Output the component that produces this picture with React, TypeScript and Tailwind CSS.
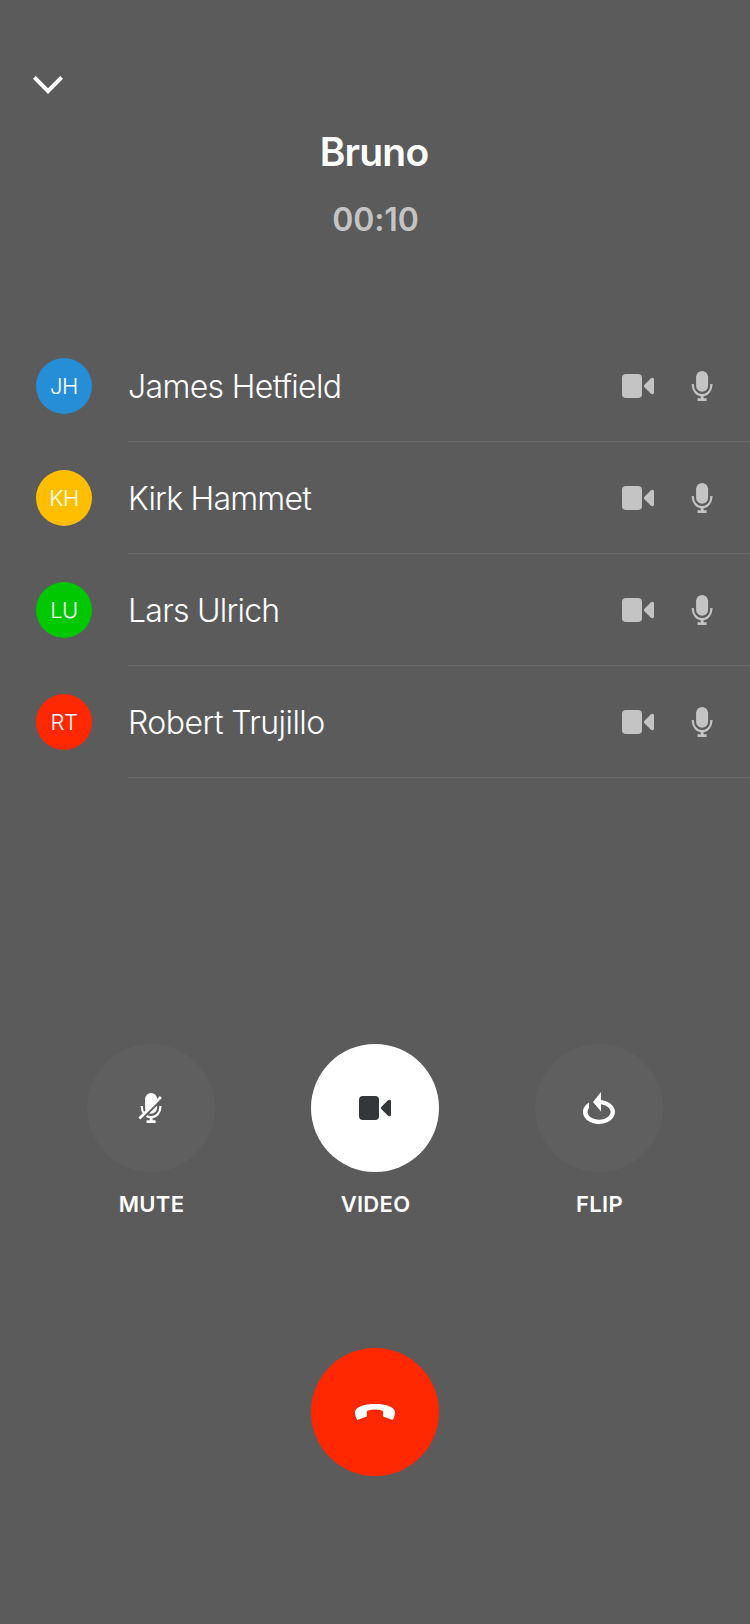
import React, { useId } from "react";

type Participant = { initials: string; name: string; color: string; tracking: string };

const participants: Participant[] = [
  { initials: "JH", name: "James Hetfield", color: "bg-[#258ed7]", tracking: "tracking-[-0.65px]" },
  { initials: "KH", name: "Kirk Hammet", color: "bg-[#ffbf00]", tracking: "tracking-[-0.78px]" },
  { initials: "LU", name: "Lars Ulrich", color: "bg-[#00c800]", tracking: "tracking-[-0.75px]" },
  { initials: "RT", name: "Robert Trujillo", color: "bg-[#ff2800]", tracking: "tracking-[-0.55px]" },
];

function VideoIcon() {
  return (
    <svg width="32" height="24" viewBox="0 0 32 24" fill="currentColor">
      <rect width="20" height="24" rx="4" />
      <path d="M22.2 11.1 28.7 4.6Q30 3.4 31.2 4.1Q32 4.5 32 5.6V18.4Q32 19.5 31.2 19.9Q30 20.6 28.7 19.4L22.2 12.9Q21.4 12 22.2 11.1Z" />
    </svg>
  );
}

function MicShape() {
  return (
    <>
      <rect x="5.1" y="0" width="12" height="20.7" rx="6" fill="currentColor" />
      <path d="M1.8 13v1a9.3 10.2 0 0 0 18.6 0v-1" fill="none" stroke="currentColor" strokeWidth="2.2" />
      <path d="M9.8 24.5h2.8v2.8h3V30H6.6v-2.7h3.2z" fill="currentColor" />
    </>
  );
}

function MicIcon() {
  return (
    <svg width="22" height="30" viewBox="0 0 22 30">
      <MicShape />
    </svg>
  );
}

function MicOffIcon() {
  const id = useId();
  return (
    <svg width="22" height="30" viewBox="0 0 22 30" className="overflow-visible">
      <mask id={id} maskUnits="userSpaceOnUse" x="-4" y="-4" width="30" height="38">
        <rect x="-4" y="-4" width="30" height="38" fill="white" />
        <path d="M-1 28.8 24 3.8" stroke="black" strokeWidth="2.4" />
      </mask>
      <g mask={`url(#${id})`}>
        <MicShape />
      </g>
      <path d="M-.6 25.4 20.9 3.9" stroke="currentColor" strokeWidth="2.8" />
    </svg>
  );
}

function FlipIcon() {
  return (
    <svg width="32" height="32" viewBox="0 0 32 32" fill="currentColor">
      <path d="M18 0V8.1A16 12 0 1 1 6 10.6V16.1A11.5 7.8 0 1 0 18 12.2V19.6L10 10Z" />
    </svg>
  );
}

function HangUpIcon() {
  return (
    <svg width="40" height="16" viewBox="0 0 40 16" fill="currentColor">
      <path d="M2.3 16C.6 13.4 0 10.4 0 7.4C1.2 2.6 9.5 0 20 0S38.8 2.6 40 7.4C40 10.4 39.4 13.4 37.7 16L28.1 12.6V6.9C23 5.1 17 5.1 11.9 6.9V12.6Z" />
    </svg>
  );
}

function CallAction({ label, active, children }: { label: string; active?: boolean; children: React.ReactNode }) {
  return (
    <div className="flex w-32 flex-col items-center">
      <button
        className={`flex size-32 items-center justify-center rounded-full ${active ? "bg-white text-[#33373a]" : "bg-[#5f5f5f] text-white"}`}
      >
        {children}
      </button>
      <span className="mt-[18px] pl-px text-[22px] leading-7 font-[590] tracking-[0.3px] text-white">{label}</span>
    </div>
  );
}

export default function App() {
  return (
    <div className="flex h-[1624px] w-[750px] flex-col overflow-hidden bg-[#5b5b5b] font-['Inter',sans-serif] text-white">
      <header className="flex h-[330px] flex-col items-center pt-[76px]">
        <button className="ml-[33px] self-start" aria-label="Minimize">
          <svg width="30" height="19" viewBox="0 0 30 19" fill="none" stroke="currentColor" strokeWidth="4" className="block">
            <path d="M1.4 1.4 15 15.2 28.6 1.4" />
          </svg>
        </button>
        <h1 className="mt-[33px] pr-0.5 text-[39px] leading-[48px] font-semibold tracking-[-0.8px]">Bruno</h1>
        <p className="mt-6 pl-px text-[32px] leading-10 font-[580] tracking-[-0.1px] text-[#c4c4c4]">00:10</p>
      </header>

      <ul className="flex flex-col">
        {participants.map((p) => (
          <li key={p.initials} className="flex h-28 items-center pl-9">
            <span className={`flex size-14 shrink-0 items-center justify-center rounded-full text-[22px] font-light tracking-[-0.5px] ${p.color}`}>
              {p.initials}
            </span>
            <div className="ml-9 flex h-28 flex-1 items-center border-b border-[#6b6b6b] pr-[37px]">
              <span className={`flex-1 pt-0.5 text-[32px] leading-10 font-light ${p.tracking}`}>{p.name}</span>
              <div className="flex items-center gap-[37px] text-[#c4c4c4]">
                <VideoIcon />
                <MicIcon />
              </div>
            </div>
          </li>
        ))}
      </ul>

      <div className="mt-[266px] flex justify-between px-[87px]">
        <CallAction label="MUTE">
          <MicOffIcon />
        </CallAction>
        <CallAction label="VIDEO" active>
          <VideoIcon />
        </CallAction>
        <CallAction label="FLIP">
          <FlipIcon />
        </CallAction>
      </div>

      <button className="mt-[130px] flex size-32 items-center justify-center self-center rounded-full bg-[#ff2800]" aria-label="End call">
        <HangUpIcon />
      </button>
    </div>
  );
}
